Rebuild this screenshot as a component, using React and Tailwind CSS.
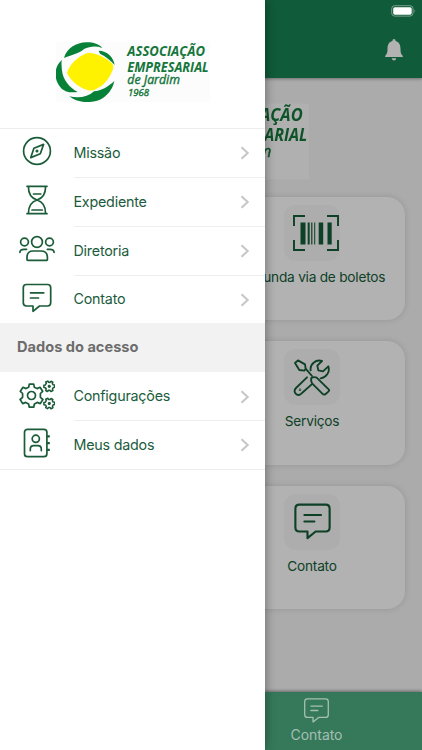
import React from "react";

function Logo({ className }) {
  return (
    <svg viewBox="48 36 462 180" className={className}>
      <rect x="48" y="36" width="462" height="180" fill="#fcfcfc" />
      <path fill="#fff200" d="M82 125C90 104 112 80 140 70Q148 66 158 70C182 76 206 88 218 103Q222 109 219 117C210 144 192 168 164 179Q152 184 142 180C118 173 92 151 84 134Q80 129 82 125Z" />
      <g fill="#078138">
        <path d="M72 84C80 56 108 37 140 37C161 37 178 43 187 54C168 47 149 49 132 57C119 70 98 74 72 84Z" />
        <path d="M176 62C202 63 220 80 224 105C212 90 197 80 180 71Z" />
        <path d="M66 90C42 109 40 145 60 170C72 186 92 189 113 186C88 172 69 149 66 122C65 109 63 99 66 90Z" />
        <path d="M88 199C116 222 162 221 190 203C209 190 219 172 223 153C203 171 185 182 162 184C144 201 116 206 88 199Z" />
      </g>
      <g fill="#15763b" fontFamily="'Open Sans', 'Noto Sans', sans-serif" fontStyle="italic">
        <text x="262" y="78" fontSize="41" fontWeight="700" textLength="233" lengthAdjust="spacingAndGlyphs">ASSOCIAÇÃO</text>
        <text x="262" y="125" fontSize="41" fontWeight="700" textLength="244" lengthAdjust="spacingAndGlyphs">EMPRESARIAL</text>
        <g stroke="#15763b" strokeWidth="1.2">
          <text x="262" y="162" fontSize="37" textLength="158" lengthAdjust="spacingAndGlyphs">de Jardim</text>
          <text x="264" y="198" fontSize="29" textLength="63" lengthAdjust="spacingAndGlyphs">1968</text>
        </g>
      </g>
    </svg>
  );
}

const stroke = { fill: "none", stroke: "currentColor", strokeLinecap: "round", strokeLinejoin: "round" };

function Compass() {
  return (
    <svg viewBox="0 0 36 36" width="36" height="36" {...stroke} strokeWidth="1.7">
      <circle cx="18" cy="18" r="13.4" />
      <path d="M24.6 11.4L21.3 20.8L11.8 24.6L14.9 15.2Z" />
      <circle cx="18" cy="18" r="0.7" fill="currentColor" />
    </svg>
  );
}

function Hourglass() {
  return (
    <svg viewBox="0 0 36 36" width="36" height="36" {...stroke} strokeWidth="1.7">
      <path d="M8 4.3H28M8 31.7H28M9.4 4.5C9.4 12 12 16.2 18 18C24 16.2 26.6 12 26.6 4.5M9.4 31.5C9.4 24 12 19.8 18 18C24 19.8 26.6 24 26.6 31.5" />
      <path d="M14.5 12H21.8M13 28H23.3" />
    </svg>
  );
}

function People() {
  return (
    <svg viewBox="0 0 36 36" width="36" height="36" {...stroke} strokeWidth="1.7">
      <circle cx="18" cy="11" r="5.4" />
      <circle cx="5.5" cy="11" r="3.9" />
      <circle cx="30.5" cy="11" r="3.9" />
      <path d="M8 28.8V26.5C8 22 10.8 20 14 20H22C25.8 20 28.4 22 28.4 26.5V28.8Q28.4 29.4 27.6 29.4H8.8Q8 29.4 8 28.8Z" />
      <path d="M.9 21.4C1 19.4 2.8 18.3 5 18.3H7.6M35.1 21.4C35 19.4 33.2 18.3 31 18.3H28.4" />
    </svg>
  );
}

function Chat({ className, weight = 1.7 }) {
  return (
    <svg viewBox="0 0 36 36" className={className} {...stroke} strokeWidth={weight}>
      <path d="M7.5 4.5H28.5Q31.7 4.5 31.7 7.7V22.8Q31.7 26 28.5 26H20.5L14 31.3V26H7.5Q4.3 26 4.3 22.8V7.7Q4.3 4.5 7.5 4.5Z" />
      <path d="M11.5 12.8H24.8M11.5 18H19.5" />
    </svg>
  );
}

const GEAR =
  "M-2.2-11.4H2.2L2.8-8.3L5.6-6.9L8.5-8.2L11.2-4.2L8.9-2V1.8L11.4 4L8.8 8.1L5.8 6.9L2.9 8.5L2.2 11.7H-2.2L-2.9 8.5L-5.8 6.9L-8.8 8.1L-11.4 4L-8.9 1.8V-2L-11.2-4.2L-8.5-8.2L-5.6-6.9L-2.8-8.3Z";

function Gears() {
  return (
    <svg viewBox="0 0 36 36" width="36" height="36" {...stroke} strokeWidth="1.7">
      <g transform="translate(12.5 18.5)">
        <path d={GEAR} />
        <circle r="4" />
      </g>
      <g transform="translate(30.3 9.3) rotate(30) scale(.46)" strokeWidth="3.4">
        <path d={GEAR} />
        <circle r="1.8" />
      </g>
      <g transform="translate(30.3 26.5) rotate(30) scale(.46)" strokeWidth="3.4">
        <path d={GEAR} />
        <circle r="1.8" />
      </g>
    </svg>
  );
}

function AddressBook() {
  return (
    <svg viewBox="0.6 0 36 36" width="36" height="36" {...stroke} strokeWidth="1.7">
      <rect x="6.1" y="4.3" width="22.4" height="27.4" rx="3" />
      <circle cx="17.4" cy="13.8" r="3.6" />
      <path d="M11.9 25.6V24Q11.9 20.6 15.3 20.6H19.5Q22.9 20.6 22.9 24V25.6" />
      <path d="M30 10.2V12.6M30 16.9V19.3M30 23.7V26.1" strokeWidth="2.8" strokeLinecap="butt" />
    </svg>
  );
}

function Barcode() {
  return (
    <svg viewBox="0 0 46 38" width="46" height="38" fill="currentColor">
      <path d="M1 12V2H12M34 2H45V12M1 26V36H12M34 36H45V26" fill="none" stroke="currentColor" strokeWidth="1.9" />
      <path d="M7.5 8.5h5v22h-5zM14.7 8.5h2v22h-2zM18.2 8.5h1.2v22h-1.2zM21.2 8.5h1v22h-1zM25.7 8.5h4.5v22h-4.5zM34.5 8.5h4.2v22h-4.2z" />
    </svg>
  );
}

function Tools() {
  return (
    <svg viewBox="115 63 114 114" width="38" height="38" {...stroke} strokeWidth="5.6">
      <path d="M121 78L130 70L151 82L153 95L172 117M121 78L134 99L149 101L153 95" />
      <path d="M170 123Q178 118 186 122L222 157Q225 160 221 164L213 171Q208 175 203 170L173 140Q168 134 170 123Z" />
      <path d="M168 100C165 82 183 66 202 72L188 86L191 100L205 103L221 88C227 106 214 122 198 124M157 121L124 153C115 162 122 174 133 174Q138 173 142 168L171 142" />
      <circle cx="136" cy="158" r="1" />
    </svg>
  );
}

function MenuRow({ icon, label, first }) {
  return (
    <li className="flex h-[48.9px] items-center pl-[18px]">
      <span className="-mt-[3px] flex w-[38px] shrink-0 justify-center text-[#1b5c38]">{icon}</span>
      <div className={`ml-[17.5px] flex h-full flex-1 items-center justify-between border-t pr-[15px] ${first ? "border-transparent" : "border-[#eeeeee]"}`}>
        <span className="-mt-[2px] text-[14.3px] tracking-[-0.22px]">{label}</span>
        <svg viewBox="0 0 10 14" width="10" height="14" fill="none" stroke="#c7c7c7" strokeWidth="2.1">
          <path d="M1.5 1.2L7.7 7L1.5 12.8" />
        </svg>
      </div>
    </li>
  );
}

function Card({ icon, label }) {
  return (
    <div className="flex h-[123.5px] flex-col items-center rounded-[18px] bg-[#b2b2b2] pt-2 shadow-[0_0_6px_rgba(0,0,0,0.13)]">
      <div className="flex h-14 w-14 items-center justify-center rounded-xl bg-[#adadad]">{icon}</div>
      <span className="mt-[6px] whitespace-nowrap text-[13.7px] leading-5 tracking-[-0.24px]">{label}</span>
    </div>
  );
}

function Drawer() {
  return (
    <aside className="absolute inset-y-0 left-0 w-[265px] bg-white text-[#1b5c3d] shadow-[0_0_10px_rgba(0,0,0,0.4)]">
      <div className="flex h-[128.5px] justify-center border-b border-[#ededed] pt-[42px]">
        <Logo className="h-[60px] w-[154px]" />
      </div>
      <ul>
        <MenuRow first icon={<Compass />} label="Missão" />
        <MenuRow icon={<Hourglass />} label="Expediente" />
        <MenuRow icon={<People />} label="Diretoria" />
        <MenuRow icon={<Chat className="h-9 w-9" />} label="Contato" />
      </ul>
      <h2 className="-mt-px flex h-[48.5px] items-center bg-[#f2f2f2] pl-[17px] pt-[2px] text-[14.6px] font-bold text-[#6c6c6c]">Dados do acesso</h2>
      <ul className="border-b border-[#ededed]">
        <MenuRow first icon={<Gears />} label="Configurações" />
        <MenuRow icon={<AddressBook />} label="Meus dados" />
      </ul>
    </aside>
  );
}

export default function App() {
  return (
    <div className="relative flex h-[750px] w-[422px] flex-col overflow-hidden bg-[#ababab] font-['Inter','Liberation_Sans',sans-serif] text-[#0d4026]">
      <header className="flex h-[78px] shrink-0 flex-col items-end bg-[#105b39] shadow-[0_1px_3px_rgba(0,0,0,0.35)]">
        <svg viewBox="0 0 25 12" width="25" height="12" className="mr-[6px] mt-[5px]">
          <rect x=".7" y=".7" width="21.3" height="10.4" rx="3" fill="none" stroke="#78a18e" />
          <rect x="2.2" y="2.2" width="18.5" height="7.5" rx="1.6" fill="#fff" />
          <path d="M23.4 4.3Q25 6 23.4 7.7Z" fill="#78a18e" />
        </svg>
        <svg viewBox="0 0 18 22" width="18" height="22" className="mr-[19px] mt-[22px]" fill="#b2b2b2">
          <path d="M9 0Q10.6 0 10.6 2C14 2.9 15.5 6 15.5 9.5C15.5 13.6 16 15.1 17.8 16.8V18H.2V16.8C2 15.1 2.5 13.6 2.5 9.5C2.5 6 4 2.9 7.4 2Q7.4 0 9 0ZM6.7 19.3H11.3Q10.9 21.5 9 21.5Q7.1 21.5 6.7 19.3Z" />
        </svg>
      </header>
      <main className="flex-1 pl-[18px] pr-[17px] pt-[25px]">
        <div className="flex justify-center">
          <Logo className="h-[77px] w-[194px] brightness-[0.7]" />
        </div>
        <div className="mt-[16.5px] grid grid-cols-2 gap-x-[15px] gap-y-[21px]">
          <Card icon={<People />} label="Diretoria" />
          <Card icon={<span className="ml-[8px]"><Barcode /></span>} label="Segunda via de boletos" />
          <Card icon={<Compass />} label="Missão" />
          <Card icon={<Tools />} label="Serviços" />
          <Card icon={<Hourglass />} label="Expediente" />
          <Card icon={<Chat className="-mt-px h-[45px] w-[45px]" />} label="Contato" />
        </div>
      </main>
      <nav className="grid h-[58px] shrink-0 grid-cols-2 bg-[#35795a] text-[#a6bfb3] shadow-[0_-1px_3px_rgba(0,0,0,0.4)]">
        <span />
        <div className="flex flex-col items-center pt-[3px]">
          <Chat className="h-[31px] w-[31px]" weight={1.5} />
          <span className="-mt-px text-[14px] leading-5 tracking-[-0.05px]">Contato</span>
        </div>
      </nav>
      <Drawer />
    </div>
  );
}
